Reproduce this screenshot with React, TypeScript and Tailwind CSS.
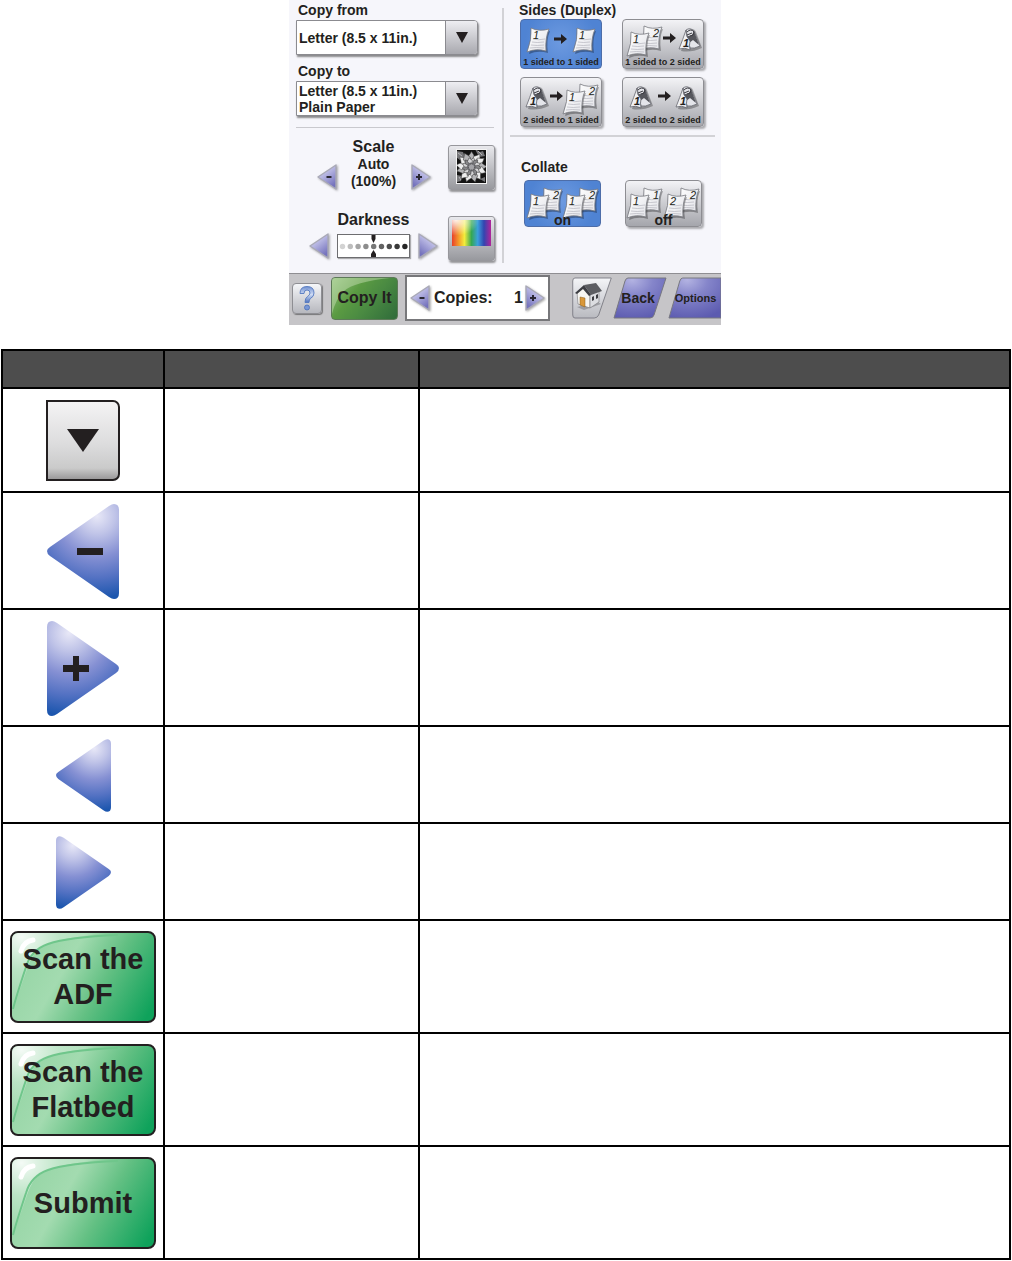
import type { ReactNode } from 'react';

type Dir = 'left' | 'right';

const ARROW = 'M72 6 V89 Q72 95 67 95 Q65 95 62 93 L3 52 Q0 50 0 47 Q0 45 3 43 L62 2 Q65 0 67 0 Q72 0 72 6 Z';

function Defs() {
  return (
    <svg className="absolute h-0 w-0" aria-hidden="true">
      <defs>
        <radialGradient id="arrowBlue" gradientUnits="userSpaceOnUse" cx="50" cy="12" r="82">
          <stop offset="0" stopColor="#e8e8f7" />
          <stop offset="0.22" stopColor="#c0c4e8" />
          <stop offset="0.5" stopColor="#8590d3" />
          <stop offset="0.75" stopColor="#5472c3" />
          <stop offset="1" stopColor="#1c56ae" />
        </radialGradient>
        <linearGradient id="arrowLilac" x1="0" y1="0" x2="0.6" y2="1">
          <stop offset="0" stopColor="#e4e4f6" />
          <stop offset="0.5" stopColor="#b3b2e0" />
          <stop offset="1" stopColor="#7573bd" />
        </linearGradient>
        <linearGradient id="sheet" x1="0" y1="0" x2="1" y2="1">
          <stop offset="0" stopColor="#ffffff" />
          <stop offset="1" stopColor="#e2e3e8" />
        </linearGradient>
        <linearGradient id="rainbow" x1="0" y1="0" x2="1" y2="0">
          <stop offset="0" stopColor="#e8402c" />
          <stop offset="0.17" stopColor="#f59a2a" />
          <stop offset="0.32" stopColor="#f3ec3c" />
          <stop offset="0.5" stopColor="#35a853" />
          <stop offset="0.66" stopColor="#3aa0dc" />
          <stop offset="0.82" stopColor="#3345b0" />
          <stop offset="1" stopColor="#b0249a" />
        </linearGradient>
        <radialGradient id="rainbowGlow" cx="0.1" cy="0" r="0.6">
          <stop offset="0" stopColor="#fff" stopOpacity="0.9" />
          <stop offset="1" stopColor="#fff" stopOpacity="0" />
        </radialGradient>
        <linearGradient id="slantGrey" x1="0" y1="0" x2="0" y2="1">
          <stop offset="0" stopColor="#f4f5f8" />
          <stop offset="1" stopColor="#b9bac0" />
        </linearGradient>
        <radialGradient id="slantPurple" cx="0.35" cy="0.05" r="1">
          <stop offset="0" stopColor="#b3b3e2" />
          <stop offset="0.4" stopColor="#8585ca" />
          <stop offset="1" stopColor="#5c5bb0" />
        </radialGradient>
        <linearGradient id="question" x1="0" y1="0" x2="0" y2="1">
          <stop offset="0" stopColor="#6f8fd0" />
          <stop offset="0.5" stopColor="#cfdcf5" />
          <stop offset="1" stopColor="#4f73bd" />
        </linearGradient>
        <radialGradient id="gloss" cx="0.1" cy="0.05" r="0.9">
          <stop offset="0" stopColor="#ffffff" stopOpacity="0.9" />
          <stop offset="0.45" stopColor="#ffffff" stopOpacity="0.35" />
          <stop offset="1" stopColor="#ffffff" stopOpacity="0" />
        </radialGradient>
      </defs>
    </svg>
  );
}

/* ---------- large artwork used in the table ---------- */

function BigArrow({ dir, sign, small }: { dir: Dir; sign?: '-' | '+'; small?: boolean }) {
  return (
    <svg viewBox="0 0 72 95" className={small ? 'h-[73px] w-[55px]' : 'h-[95px] w-[72px]'}>
      <path d={ARROW} fill="url(#arrowBlue)" transform={dir === 'right' ? 'translate(72 0) scale(-1 1)' : undefined} />
      {sign === '-' && <path d="M30 44h26v7h-26z" fill="#231f20" />}
      {sign === '+' && <path d="M16 44h10v-9h6v9h10v7h-10v9h-6v-9h-10z" fill="#231f20" />}
    </svg>
  );
}

function GreenButton({ children }: { children: ReactNode }) {
  return (
    <button
      type="button"
      className="relative flex h-[92px] w-[146px] items-center justify-center overflow-hidden rounded-[8px] border-2 border-[#231f20] bg-[linear-gradient(120deg,#8fd2a0_0%,#a3dbb0_38%,#63c083_62%,#0fa25b_95%)] text-[29px] leading-[35px] font-bold text-[#231f20]"
    >
      <svg viewBox="0 0 142 88" className="absolute inset-0 h-full w-full" aria-hidden="true">
        <path d="M0 0 H95 Q40 6 30 14 Q20 20 15 36 L0 80 Z" fill="url(#gloss)" />
        <path d="M1 76 Q4 64 14 34 Q19 17 36 11 Q56 4 106 2" fill="none" stroke="#6fc68b" strokeWidth="2" />
        <path d="M9 18 Q12 8 21 7" fill="none" stroke="#fff" strokeWidth="5" strokeLinecap="round" />
      </svg>
      <span className="relative">{children}</span>
    </button>
  );
}

function BigDropdownButton() {
  return (
    <button
      type="button"
      aria-label="Open list"
      className="flex h-[81px] w-[74px] items-center justify-center rounded-r-[7px] border-2 border-[#231f20] bg-[linear-gradient(#f4f3f4,#dcdcdd_55%,#cacaca_86%,#9b999a)]"
    >
      <svg viewBox="0 0 32 23" className="h-[23px] w-8">
        <path d="M0 0h32L16 23z" fill="#231f20" />
      </svg>
    </button>
  );
}

/* ---------- touch screen parts ---------- */

function SmallArrow({ dir, sign, label }: { dir: Dir; sign?: '-' | '+'; label: string }) {
  return (
    <button type="button" aria-label={label} className="h-[26px] w-5 shrink-0 drop-shadow-[1px_1px_1px_rgba(0,0,0,0.35)]">
      <svg viewBox="0 0 20 26" className="h-full w-full">
        <path
          d="M19 1 V25 L1 13 Z"
          fill="url(#arrowLilac)"
          stroke="#a9a9b6"
          strokeWidth="1.4"
          strokeLinejoin="round"
          transform={dir === 'right' ? 'translate(20 0) scale(-1 1)' : undefined}
        />
        {sign === '-' && <path d="M9.5 12h5v2h-5z" fill="#2a2833" />}
        {sign === '+' && <path d="M5 12h2v-2h2v2h2v2h-2v2h-2v-2h-2z" fill="#2a2833" />}
      </svg>
    </button>
  );
}

function PaperSelect({ id, label, value, detail }: { id: string; label: string; value: string; detail?: string }) {
  return (
    <div>
      <label htmlFor={id} className="block pl-0.5 text-[14px] leading-5">{label}</label>
      <div className="flex h-[35px] w-[182px] overflow-hidden rounded-r-[4px] border border-[#8b8b90] bg-white shadow-[1px_2px_2px_rgba(0,0,0,0.45)]">
        <div className="flex flex-1 flex-col justify-center pl-0.5 text-[14px] leading-4">
          <select id={id} defaultValue={value} className="w-full appearance-none bg-transparent leading-4">
            <option>{value}</option>
          </select>
          {detail && <span>{detail}</span>}
        </div>
        <div className="flex w-8 items-center justify-center border-l border-[#8b8b90] bg-linear-to-b from-[#eeeef2] to-[#a9a9af]" aria-hidden="true">
          <svg viewBox="0 0 12 11" className="h-[11px] w-3">
            <path d="M0 0h12L6 11z" fill="#231f20" />
          </svg>
        </div>
      </div>
    </div>
  );
}

function Sheet({ x, y, n, flip }: { x: number; y: number; n: string; flip?: boolean }) {
  return (
    <g transform={`translate(${x} ${y})`}>
      <path d="M5 2 Q13 6 23 3 Q19 12 21 25 Q11 22 2 26 Q6 12 5 2Z" fill="#000" opacity="0.3" />
      <path d="M4 0 Q12 4 22 1 Q18 10 19 23 Q9 20 0 24 Q5 11 4 0Z" fill="url(#sheet)" stroke="#77787f" strokeWidth="0.8" />
      <path d="M6 11q5 1.500 12 0M5 14q5 1 12 0M4 17q6 1 13 0M3 20q6 -1 14 0" fill="none" stroke="#b4b5bd" strokeWidth="0.7" />
      <text x={flip ? 13 : 6} y="11" fontSize="11" fontStyle="italic" fontWeight="400" fill="#231f20">{n}</text>
    </g>
  );
}

function SheetPair({ x, y, front, back }: { x: number; y: number; front: string; back: string }) {
  return (
    <g>
      <Sheet x={x + 13} y={y - 6} n={back} flip />
      <Sheet x={x} y={y} n={front} />
    </g>
  );
}

// one sheet curled over so both faces show
function Curl({ x, y }: { x: number; y: number }) {
  return (
    <g transform={`translate(${x} ${y})`}>
      <path d="M9 2 Q15 -1 17 4 L23 20 Q12 25 2 23 Z" fill="#000" opacity="0.28" />
      <path d="M7 2 Q11 -1 15 3 L21 18 Q15 21 11 20 Z" fill="#e4e5ea" stroke="#66676e" strokeWidth="0.8" />
      <path d="M6 9 L13 7 L15 3 L20 17 L14 12 L10 15 Z" fill="#55565c" />
      <path d="M7 2 Q6 8 11 13 Q10 17 11 22 Q6 19 0 21 Q4 11 7 2Z" fill="url(#sheet)" stroke="#66676e" strokeWidth="0.8" />
      <path d="M8 4 Q12 0 15 4 Q15 8 11 8 M8 7 L13 5" fill="none" stroke="#3c3c42" strokeWidth="1" />
      <text x="4" y="19" fontSize="11" fontStyle="italic" fill="#231f20">1</text>
    </g>
  );
}

function Arrow({ x, y }: { x: number; y: number }) {
  return <path transform={`translate(${x} ${y})`} d="M0 3.500h7V0l6 5-6 5V6.500H0z" fill="#231f20" />;
}

const KEY_ON = 'border-[#4d6da8] bg-[radial-gradient(circle_at_50%_45%,#6d9ae0,#4f83d3_75%)]';
const KEY_OFF = 'border-[#8d8d92] bg-linear-to-b from-[#f3f3f6] to-[#a5a6ac] shadow-[2px_2px_2px_rgba(0,0,0,0.3)]';

function DuplexKey({ on, label, children }: { on?: boolean; label: string; children: ReactNode }) {
  return (
    <button type="button" aria-pressed={!!on} className={`relative h-[50px] w-[82px] rounded-[4px] border ${on ? KEY_ON : KEY_OFF}`}>
      <svg viewBox="0 0 80 48" className="absolute inset-0 h-full w-full" aria-hidden="true">{children}</svg>
      <span className="absolute inset-x-0 bottom-0 text-center text-[9px] leading-[11px] whitespace-nowrap">{label}</span>
    </button>
  );
}

function CollateKey({ on, label, children }: { on?: boolean; label: string; children: ReactNode }) {
  return (
    <button type="button" aria-pressed={!!on} className={`relative h-[47px] w-[77px] rounded-[4px] border ${on ? KEY_ON : KEY_OFF}`}>
      <svg viewBox="0 0 75 45" className="absolute inset-0 h-full w-full" aria-hidden="true">{children}</svg>
      <span className="absolute inset-x-0 -bottom-0.5 text-center text-[14px] leading-4">{label}</span>
    </button>
  );
}

const TILE =
  'flex h-[45px] w-[47px] items-start justify-center rounded-[3px] border border-[#97979c] bg-linear-to-b from-[#e9e9ed] to-[#98999e] pt-[3px] shadow-[1px_2px_2px_rgba(0,0,0,0.4)]';

function Flower() {
  const outer = Array.from({ length: 13 }, (_, i) => i * 27.7);
  return (
    <svg viewBox="0 0 31 35" className="h-[35px] w-[31px]">
      <rect width="31" height="35" fill="#141414" />
      <path d="M0 2l7 1 2 5-5 3-4-3zM19 0l5 3 3-1 2 5-6 1zM1 26l5 1-1 5-4 1zM24 30l5-2v5z" fill="#77777a" />
      <path d="M2 4l4 3M22 2l4 4M3 28l2 3" stroke="#c4c4c6" strokeWidth="0.8" />
      {outer.map((a, i) => (
        <path
          key={a}
          d="M15.500 18 L11.500 8 L14 5 L15.500 2.500 L17.500 5.500 L19 9 Z"
          fill={i % 3 ? '#ededed' : '#b4b4b6'}
          stroke="#3a3a3a"
          strokeWidth="0.5"
          transform={`rotate(${a + (i % 2) * 5} 15.500 18)`}
        />
      ))}
      {outer.map((a, i) => (
        <path
          key={a}
          d="M15.500 18 L13 11.500 L15.500 8.500 L18 12 Z"
          fill={i % 2 ? '#88888b' : '#d4d4d6'}
          stroke="#333"
          strokeWidth="0.5"
          transform={`rotate(${a + 13} 15.500 18)`}
        />
      ))}
      <circle cx="15.500" cy="18" r="4.500" fill="#6c6c70" />
      <circle cx="15.500" cy="18" r="3" fill="#a4a4a8" stroke="#3c3c3f" strokeWidth="0.8" strokeDasharray="1 1" />
      <rect x="0.500" y="0.500" width="30" height="34" fill="none" stroke="#f3f3f3" />
    </svg>
  );
}

const DOTS = ['#d3d3d3', '#bdbdbd', '#a4a4a4', '#8c8c8c', '#777777', '#626262', '#4d4d4d', '#393939', '#262626'];

function DarknessMeter() {
  return (
    <div className="h-6 w-[73px] border border-[#6d6d70] bg-white shadow-[1px_1px_1px_rgba(0,0,0,0.3)]">
      <svg viewBox="0 0 71 22" className="h-full w-full">
        {DOTS.map((c, i) => (
          <circle key={c} cx={4.5 + i * 7.8} cy="11.500" r="2.700" fill={c} />
        ))}
        <path d="M33.500 0h4v4l-2 4-2-4zM35.500 15l2.500 4v3h-5v-3z" fill="#231f20" />
      </svg>
    </div>
  );
}

function House() {
  return (
    <g transform="translate(3 6)">
      <path d="M2 24l7 3 17-6-3-2z" fill="#6f7075" opacity="0.5" />
      <path d="M2 9l7-5 6 7v14l-12-4z" fill="#f7f6f2" stroke="#77777b" strokeWidth="0.6" />
      <path d="M15 11l9-3v11l-9 6z" fill="#dcdde1" stroke="#77777b" strokeWidth="0.6" />
      <path d="M9 2L21 0l6 8-11 4z" fill="#5c5d62" />
      <path d="M0 10L9 2l7 10-2 1-6-7-6 5z" fill="#3d3e43" />
      <path d="M5 14l5 1v9l-5-2z" fill="#d9983a" stroke="#8a5d1c" strokeWidth="0.5" />
      <path d="M17 14l2-1v4l-2 1zM21 12l2-1v4l-2 1z" fill="#3c3d42" />
    </g>
  );
}

function SlantKey({ shape, fill, width, children }: { shape: string; fill: string; width: string; children: ReactNode }) {
  return (
    <button type="button" className={`relative flex h-[42px] items-center justify-center ${width}`}>
      <svg viewBox="0 0 54 42" preserveAspectRatio="none" className="absolute inset-0 h-full w-full" aria-hidden="true">
        <path d={shape} fill={fill} stroke="#77777f" />
      </svg>
      {children}
    </button>
  );
}

function CopyScreen() {
  return (
    <section className="w-[432px] bg-[#f6f6fb] font-bold text-[#231f20]">
      <div className="flex h-[273px]">
        <div className="w-[213px] pl-[7px]">
          <PaperSelect id="copy-from" label="Copy from" value="Letter (8.5 x 11in.)" />
          <div className="h-1.5" />
          <PaperSelect id="copy-to" label="Copy to" value="Letter (8.5 x 11in.)" detail="Plain Paper" />
          <hr className="mt-[11px] w-[198px] border-[#c9c9ce]" />

          <div className="mt-2.5 flex items-end pl-[7px]">
            <div className="w-[145px] pr-1 text-center">
              <div className="flex items-end justify-center">
                <SmallArrow dir="left" sign="-" label="Decrease scale" />
                <div className="w-[74px] text-[14px] leading-[17px]">
                  <h3 className="text-[16px] leading-[18px]">Scale</h3>
                  <p>Auto</p>
                  <p>(100%)</p>
                </div>
                <SmallArrow dir="right" sign="+" label="Increase scale" />
              </div>
            </div>
            <button type="button" aria-label="Content photo" className={TILE}>
              <Flower />
            </button>
          </div>

          <div className="mt-5 flex items-end pl-[7px]">
            <div className="w-[145px] pr-1 pb-0.5 text-center">
              <h3 className="text-[16px] leading-5">Darkness</h3>
              <div className="mt-[3px] flex items-center justify-center gap-2">
                <SmallArrow dir="left" label="Lighter" />
                <DarknessMeter />
                <SmallArrow dir="right" label="Darker" />
              </div>
            </div>
            <button type="button" aria-label="Color" className={TILE}>
              <svg viewBox="0 0 39 26" className="h-[26px] w-[39px]">
                <rect width="39" height="26" fill="url(#rainbow)" />
                <rect width="39" height="26" fill="url(#rainbowGlow)" />
              </svg>
            </button>
          </div>
        </div>

        <div className="mt-2 mb-2.5 w-0.5 bg-[#d2d2d6]" />

        <div className="flex-1 pt-0.5">
          <h3 className="pl-[15px] text-[14px] leading-[17px]">Sides (Duplex)</h3>
          <div className="grid grid-cols-[82px_82px] gap-x-5 gap-y-2 pl-4">
            <DuplexKey on label="1 sided to 1 sided">
              <Sheet x={6} y={8} n="1" />
              <Arrow x={33} y={14} />
              <Sheet x={52} y={8} n="1" />
            </DuplexKey>
            <DuplexKey label="1 sided to 2 sided">
              <SheetPair x={4} y={12} front="1" back="2" />
              <Arrow x={40} y={13} />
              <Curl x={56} y={8} />
            </DuplexKey>
            <DuplexKey label="2 sided to 1 sided">
              <Curl x={5} y={8} />
              <Arrow x={29} y={13} />
              <SheetPair x={42} y={12} front="1" back="2" />
            </DuplexKey>
            <DuplexKey label="2 sided to 2 sided">
              <Curl x={7} y={8} />
              <Arrow x={35} y={13} />
              <Curl x={53} y={8} />
            </DuplexKey>
          </div>
          <hr className="mt-2 mr-1.5 ml-1.5 border-t-2 border-[#d2d2d6]" />
          <h3 className="mt-5 pl-[17px] text-[14px] leading-5">Collate</h3>
          <div className="mt-[3px] flex gap-6 pl-5">
            <CollateKey on label="on">
              <SheetPair x={2} y={13} front="1" back="2" />
              <SheetPair x={38} y={13} front="1" back="2" />
            </CollateKey>
            <CollateKey label="off">
              <SheetPair x={1} y={13} front="1" back="1" />
              <SheetPair x={38} y={13} front="2" back="2" />
            </CollateKey>
          </div>
        </div>
      </div>

      <div className="flex h-[52px] items-center border-t border-[#8f8e92] bg-[#c6c5c8] pb-[3px] pl-[3px]">
        <button
          type="button"
          aria-label="Help"
          className="mr-[9px] h-[31px] w-[30px] rounded-[4px] border border-[#8e8e93] bg-linear-to-b from-[#f5f6f9] to-[#b7b8be] shadow-[1px_1px_1px_rgba(0,0,0,0.4)]"
        >
          <svg viewBox="0 0 28 28" className="h-full w-full">
            <path d="M7 9 Q7 2 14 2 Q21 2 21 8.500 Q21 12 17.500 14 Q16 15 16 18 H12 Q12 13.500 14.500 12 Q17 10.500 17 8.500 Q17 5.500 14 5.500 Q11 5.500 11 9 Z" fill="url(#question)" stroke="#5478c0" strokeWidth="0.9" />
            <circle cx="14" cy="23" r="2.500" fill="#7897d6" stroke="#4a6db5" strokeWidth="0.8" />
          </svg>
        </button>
        <button
          type="button"
          className="relative mr-[7px] h-[43px] w-[67px] overflow-hidden rounded-[4px] border border-[#5d7a58] bg-[linear-gradient(130deg,#8fc07a,#5a9a42_35%,#4a8a42_60%,#2f6b3a)] text-[16px] leading-5"
        >
          <svg viewBox="0 0 65 41" className="absolute inset-0 h-full w-full" aria-hidden="true">
            <path d="M0 0H58Q22 4 12 13Q4 20 0 36Z" fill="#d9ecc9" opacity="0.4" />
          </svg>
          <span className="relative">Copy It</span>
        </button>
        <div className="mr-[22px] flex h-[46px] w-[145px] items-center border-2 border-[#77777a] bg-white px-[3px] text-[16px] leading-5">
          <SmallArrow dir="left" sign="-" label="Fewer copies" />
          <span className="pl-1">Copies:</span>
          <span className="ml-auto pr-0.5">1</span>
          <SmallArrow dir="right" sign="+" label="More copies" />
        </div>
        <SlantKey shape="M4 1H53L36 38Q34 41 30 41H4Q1 41 1 38V4Q1 1 4 1Z" fill="url(#slantGrey)" width="w-10">
          <svg viewBox="0 0 40 42" className="relative h-[42px] w-10" role="img" aria-label="Home">
            <House />
          </svg>
        </SlantKey>
        <SlantKey shape="M15 1H53L41 38Q40 41 37 41H1L12 4Q13 1 15 1Z" fill="url(#slantPurple)" width="ml-px w-[54px]">
          <span className="relative pr-1 text-[14px] leading-5">Back</span>
        </SlantKey>
        <SlantKey shape="M15 1H54V41H1L12 4Q13 1 15 1Z" fill="url(#slantPurple)" width="ml-px w-[53px]">
          <span className="relative pl-0.5 text-[11px] leading-5">Options</span>
        </SlantKey>
      </div>
    </section>
  );
}

const ROWS: { height: string; art: ReactNode }[] = [
  { height: 'h-[104px]', art: <BigDropdownButton /> },
  { height: 'h-[117px]', art: <BigArrow dir="left" sign="-" /> },
  { height: 'h-[117px]', art: <BigArrow dir="right" sign="+" /> },
  { height: 'h-[97px]', art: <BigArrow dir="left" small /> },
  { height: 'h-[97px]', art: <BigArrow dir="right" small /> },
  { height: 'h-[113px]', art: <GreenButton>Scan the<br />ADF</GreenButton> },
  { height: 'h-[113px]', art: <GreenButton>Scan the<br />Flatbed</GreenButton> },
  { height: 'h-[113px]', art: <GreenButton>Submit</GreenButton> },
];

export default function App() {
  return (
    <main className="bg-white px-px font-['Liberation_Sans',Arial,sans-serif]">
      <Defs />
      <div className="flex justify-center pr-0.5">
        <CopyScreen />
      </div>
      <table className="mt-6 w-full table-fixed border-collapse">
        <colgroup>
          <col className="w-[162px]" />
          <col className="w-[255px]" />
          <col />
        </colgroup>
        <thead>
          <tr className="h-[38px] bg-[#4d4d4d]">
            <th scope="col" className="border-2 border-black p-0" />
            <th scope="col" className="border-2 border-black p-0" />
            <th scope="col" className="border-2 border-black p-0" />
          </tr>
        </thead>
        <tbody>
          {ROWS.map((row, i) => (
            <tr key={i} className={row.height}>
              <td className="border-2 border-black p-0">
                <div className="flex justify-center pt-px">{row.art}</div>
              </td>
              <td className="border-2 border-black p-0" />
              <td className="border-2 border-black p-0" />
            </tr>
          ))}
        </tbody>
      </table>
    </main>
  );
}
